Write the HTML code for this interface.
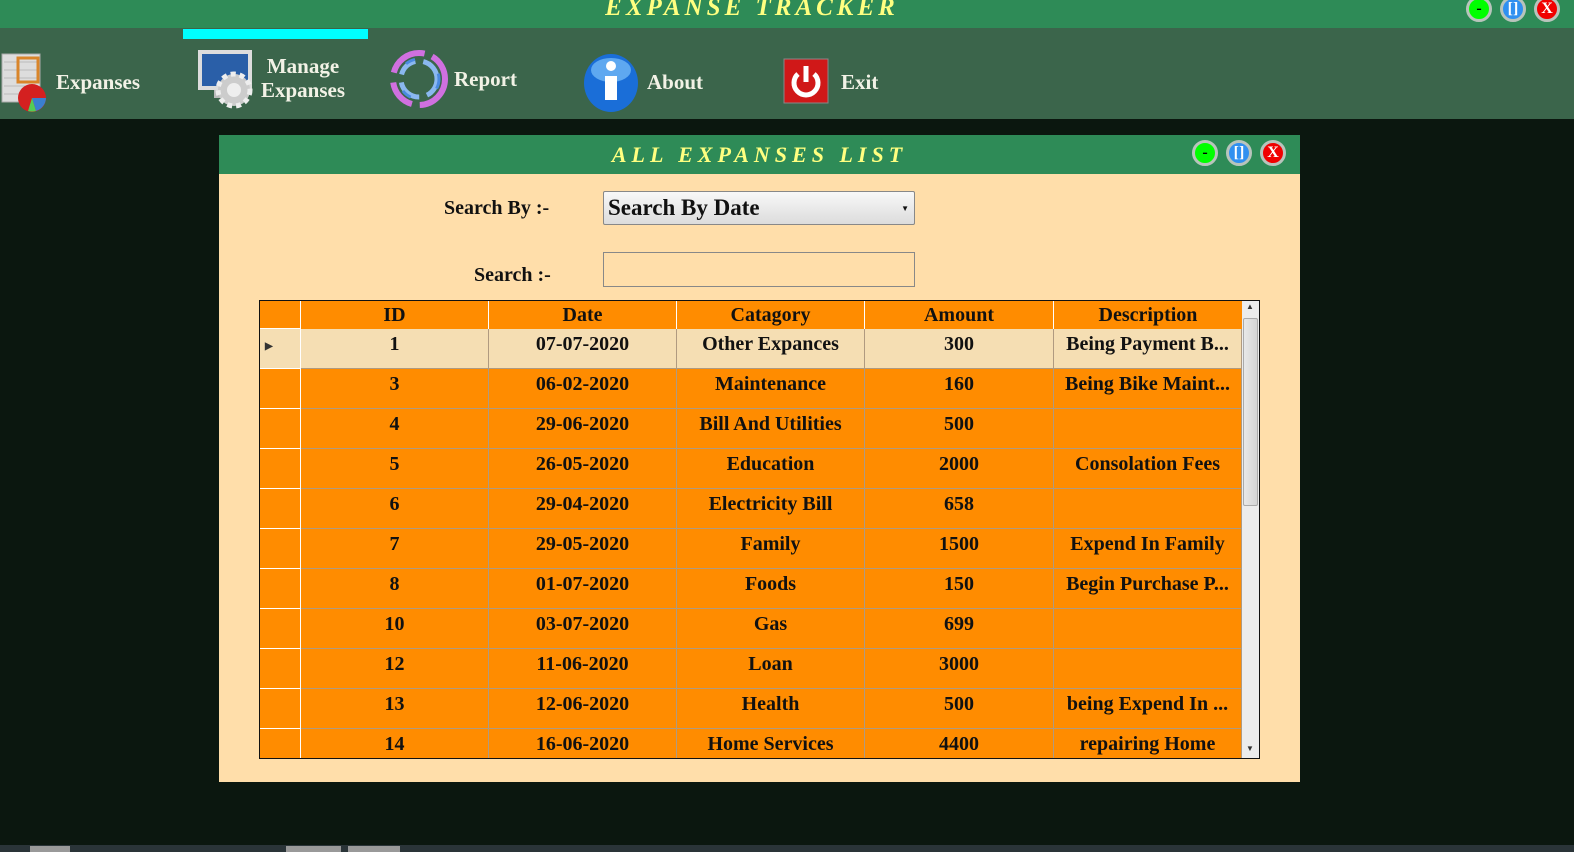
<!DOCTYPE html>
<html><head><meta charset="utf-8"><style>
*{margin:0;padding:0;box-sizing:border-box}
body{width:1574px;height:852px;background:#0b170f;position:relative;overflow:hidden;font-family:"Liberation Serif",serif;font-weight:bold}
.abs{position:absolute}
.top{left:0;top:0;width:1574px;height:28px;background:#2e8b57}
.title{left:0;width:1574px;top:-6px;text-align:center;color:#ffff80;font-style:italic;font-size:25px;letter-spacing:4px;padding-right:70px}
.nav{left:0;top:28px;width:1574px;height:91px;background:#3b654b}
.nt{color:#f2f2e6;font-size:21px;line-height:24px}
.btn{width:26px;height:26px;border-radius:50%;border:3px solid #b8c4bc;text-align:center;font-size:16px;line-height:19px;color:#fff}
.panel{left:219px;top:135px;width:1081px;height:647px;background:#ffdeaa}
.ph{left:219px;top:135px;width:1081px;height:39px;background:#2e8b57}
.lbl{font-size:20px;color:#111}
.cell{position:absolute;text-align:center;font-size:20px;line-height:22px;color:#111;padding-top:4px;border-right:1px solid #b09a80;border-bottom:1px solid #b09a80;overflow:hidden;white-space:nowrap}
</style></head><body>
<div class="abs top"></div>
<div class="abs title">EXPANSE TRACKER</div>
<div class="abs btn" style="left:1466px;top:-4px;background:#00ff00;color:#000">-</div>
<div class="abs btn" style="left:1500px;top:-4px;background:#3090f0">[]</div>
<div class="abs btn" style="left:1534px;top:-4px;background:#f00000">X</div>
<div class="abs nav"></div>
<div class="abs" style="left:183px;top:29px;width:185px;height:10px;background:#00ffff"></div>
<svg class="abs" style="left:0;top:52px" width="52" height="60"><rect x="2" y="2" width="38" height="48" fill="#ddd" stroke="#aaa"/><g stroke="#bbb"><line x1="4" y1="10" x2="38" y2="10"/><line x1="4" y1="18" x2="38" y2="18"/><line x1="4" y1="26" x2="38" y2="26"/><line x1="4" y1="34" x2="38" y2="34"/><line x1="4" y1="42" x2="38" y2="42"/></g><rect x="18" y="6" width="20" height="24" fill="none" stroke="#d9852a" stroke-width="3"/><circle cx="32" cy="46" r="14" fill="#d42020"/><path d="M32 46 L46 46 A14 14 0 0 1 36 59Z" fill="#3a7fd0"/><path d="M32 46 L36 59 A14 14 0 0 1 28 59Z" fill="#5c5"/></svg>
<div class="abs nt" style="left:56px;top:70px">Expanses</div>
<svg class="abs" style="left:196px;top:48px" width="62" height="64"><rect x="2" y="2" width="54" height="40" fill="#ddd"/><rect x="6" y="6" width="46" height="32" fill="#2a5fa8"/><rect x="18" y="42" width="20" height="8" fill="#bbb"/><circle cx="38" cy="42" r="16" fill="#ccc" stroke="#eee" stroke-width="5" stroke-dasharray="5 4"/><circle cx="38" cy="42" r="7" fill="#eee"/></svg>
<div class="abs nt" style="left:261px;top:54px;text-align:center">Manage<br>Expanses</div>
<svg class="abs" style="left:388px;top:48px" width="62" height="62"><circle cx="31" cy="31" r="26" fill="none" stroke="#d070e0" stroke-width="6" stroke-dasharray="40 8 30 10"/><circle cx="31" cy="31" r="18" fill="none" stroke="#8ab8f0" stroke-width="5" stroke-dasharray="20 8 25 8"/><circle cx="31" cy="31" r="20" fill="none" stroke="#4a8ae0" stroke-width="3" stroke-dasharray="10 30"/></svg>
<div class="abs nt" style="left:454px;top:67px">Report</div>
<svg class="abs" style="left:582px;top:52px" width="58" height="62"><ellipse cx="29" cy="31" rx="27" ry="29" fill="#1a6ed8"/><ellipse cx="29" cy="18" rx="20" ry="12" fill="#5ea8f0"/><circle cx="29" cy="14" r="5" fill="#fff"/><rect x="23" y="24" width="12" height="24" fill="#fff"/></svg>
<div class="abs nt" style="left:647px;top:70px">About</div>
<svg class="abs" style="left:783px;top:58px" width="46" height="46"><rect x="1" y="1" width="44" height="44" fill="#d01818" stroke="#888"/><path d="M15 16 A12 12 0 1 0 31 16" fill="none" stroke="#fff" stroke-width="5"/><line x1="23" y1="8" x2="23" y2="24" stroke="#fff" stroke-width="5"/></svg>
<div class="abs nt" style="left:841px;top:70px">Exit</div>

<div class="abs panel"></div>
<div class="abs ph"></div>
<div class="abs" style="left:219px;top:142px;width:1081px;text-align:center;color:#ffff80;font-style:italic;font-size:22px;letter-spacing:5px">ALL EXPANSES LIST</div>
<div class="abs btn" style="left:1192px;top:140px;background:#00ff00;color:#000">-</div>
<div class="abs btn" style="left:1226px;top:140px;background:#3090f0">[]</div>
<div class="abs btn" style="left:1260px;top:140px;background:#f00000">X</div>
<div class="abs lbl" style="left:444px;top:197px">Search By :-</div>
<div class="abs" style="left:603px;top:191px;width:312px;height:34px;border:1px solid #888;border-radius:2px;background:linear-gradient(#f8f8f8,#dcdcdc);font-size:23px;padding:3px 4px;color:#111">Search By Date<span style="position:absolute;right:5px;top:12px;font-size:8px">▼</span></div>
<div class="abs lbl" style="left:474px;top:264px">Search :-</div>
<div class="abs" style="left:603px;top:252px;width:312px;height:35px;border:1px solid #888;background:#ffdeaa"></div>

<div class="abs" style="left:259px;top:300px;width:1001px;height:459px;border:1px solid #111;background:#ff8c00;overflow:hidden"></div>
<div class="abs" style="left:1242px;top:301px;width:17px;height:457px;background:#ececec"></div>
<div class="abs" style="left:1243px;top:318px;width:15px;height:188px;background:linear-gradient(90deg,#e8e8e8,#d4d4d4);border:1px solid #aaa;border-radius:2px"></div>
<div class="abs" style="left:1246px;top:302px;font-size:8px;color:#333">▲</div>
<div class="abs" style="left:1246px;top:744px;font-size:8px;color:#333">▼</div>

<div class="abs" style="left:0;top:845px;width:1574px;height:7px;background:#2a3438"></div>
<div class="abs" style="left:30px;top:846px;width:40px;height:6px;background:#999"></div>
<div class="abs" style="left:286px;top:846px;width:55px;height:6px;background:#999"></div>
<div class="abs" style="left:348px;top:846px;width:52px;height:6px;background:#999"></div>

<div class="abs" style="left:260px;top:301px">
<div class="cell" style="left:0;top:0;width:41px;height:28px;border-color:#fff"></div>
<div class="cell" style="left:41px;top:0;width:188px;height:28px;border-color:#fff;border-bottom:0;padding-top:3px">ID</div>
<div class="cell" style="left:229px;top:0;width:188px;height:28px;border-color:#fff;border-bottom:0;padding-top:3px">Date</div>
<div class="cell" style="left:417px;top:0;width:188px;height:28px;border-color:#fff;border-bottom:0;padding-top:3px">Catagory</div>
<div class="cell" style="left:605px;top:0;width:189px;height:28px;border-color:#fff;border-bottom:0;padding-top:3px">Amount</div>
<div class="cell" style="left:794px;top:0;width:188px;height:28px;border-right:0;border-bottom:0;padding-top:3px">Description</div>
</div>
<div class="abs" style="left:260px;top:329px">
<div style="position:absolute;left:0;top:0;width:982px;height:40px;background:#f5deb3"></div>
<div class="abs" style="left:5px;top:12px;font-size:10px;color:#333">▶</div>
</div>
<div class="abs" style="left:260px;top:329px">
<div class="cell" style="left:0;top:0;width:41px;height:40px;border-color:#fff"></div><div class="cell" style="left:41px;top:0;width:188px;height:40px">1</div><div class="cell" style="left:229px;top:0;width:188px;height:40px">07-07-2020</div><div class="cell" style="left:417px;top:0;width:188px;height:40px">Other Expances</div><div class="cell" style="left:605px;top:0;width:189px;height:40px">300</div><div class="cell" style="left:794px;top:0;width:188px;height:40px">Being Payment B...</div>
<div class="cell" style="left:0;top:40px;width:41px;height:40px;border-color:#fff"></div><div class="cell" style="left:41px;top:40px;width:188px;height:40px">3</div><div class="cell" style="left:229px;top:40px;width:188px;height:40px">06-02-2020</div><div class="cell" style="left:417px;top:40px;width:188px;height:40px">Maintenance</div><div class="cell" style="left:605px;top:40px;width:189px;height:40px">160</div><div class="cell" style="left:794px;top:40px;width:188px;height:40px">Being Bike Maint...</div>
<div class="cell" style="left:0;top:80px;width:41px;height:40px;border-color:#fff"></div><div class="cell" style="left:41px;top:80px;width:188px;height:40px">4</div><div class="cell" style="left:229px;top:80px;width:188px;height:40px">29-06-2020</div><div class="cell" style="left:417px;top:80px;width:188px;height:40px">Bill And Utilities</div><div class="cell" style="left:605px;top:80px;width:189px;height:40px">500</div><div class="cell" style="left:794px;top:80px;width:188px;height:40px"></div>
<div class="cell" style="left:0;top:120px;width:41px;height:40px;border-color:#fff"></div><div class="cell" style="left:41px;top:120px;width:188px;height:40px">5</div><div class="cell" style="left:229px;top:120px;width:188px;height:40px">26-05-2020</div><div class="cell" style="left:417px;top:120px;width:188px;height:40px">Education</div><div class="cell" style="left:605px;top:120px;width:189px;height:40px">2000</div><div class="cell" style="left:794px;top:120px;width:188px;height:40px">Consolation Fees</div>
<div class="cell" style="left:0;top:160px;width:41px;height:40px;border-color:#fff"></div><div class="cell" style="left:41px;top:160px;width:188px;height:40px">6</div><div class="cell" style="left:229px;top:160px;width:188px;height:40px">29-04-2020</div><div class="cell" style="left:417px;top:160px;width:188px;height:40px">Electricity Bill</div><div class="cell" style="left:605px;top:160px;width:189px;height:40px">658</div><div class="cell" style="left:794px;top:160px;width:188px;height:40px"></div>
<div class="cell" style="left:0;top:200px;width:41px;height:40px;border-color:#fff"></div><div class="cell" style="left:41px;top:200px;width:188px;height:40px">7</div><div class="cell" style="left:229px;top:200px;width:188px;height:40px">29-05-2020</div><div class="cell" style="left:417px;top:200px;width:188px;height:40px">Family</div><div class="cell" style="left:605px;top:200px;width:189px;height:40px">1500</div><div class="cell" style="left:794px;top:200px;width:188px;height:40px">Expend In Family</div>
<div class="cell" style="left:0;top:240px;width:41px;height:40px;border-color:#fff"></div><div class="cell" style="left:41px;top:240px;width:188px;height:40px">8</div><div class="cell" style="left:229px;top:240px;width:188px;height:40px">01-07-2020</div><div class="cell" style="left:417px;top:240px;width:188px;height:40px">Foods</div><div class="cell" style="left:605px;top:240px;width:189px;height:40px">150</div><div class="cell" style="left:794px;top:240px;width:188px;height:40px">Begin Purchase P...</div>
<div class="cell" style="left:0;top:280px;width:41px;height:40px;border-color:#fff"></div><div class="cell" style="left:41px;top:280px;width:188px;height:40px">10</div><div class="cell" style="left:229px;top:280px;width:188px;height:40px">03-07-2020</div><div class="cell" style="left:417px;top:280px;width:188px;height:40px">Gas</div><div class="cell" style="left:605px;top:280px;width:189px;height:40px">699</div><div class="cell" style="left:794px;top:280px;width:188px;height:40px"></div>
<div class="cell" style="left:0;top:320px;width:41px;height:40px;border-color:#fff"></div><div class="cell" style="left:41px;top:320px;width:188px;height:40px">12</div><div class="cell" style="left:229px;top:320px;width:188px;height:40px">11-06-2020</div><div class="cell" style="left:417px;top:320px;width:188px;height:40px">Loan</div><div class="cell" style="left:605px;top:320px;width:189px;height:40px">3000</div><div class="cell" style="left:794px;top:320px;width:188px;height:40px"></div>
<div class="cell" style="left:0;top:360px;width:41px;height:40px;border-color:#fff"></div><div class="cell" style="left:41px;top:360px;width:188px;height:40px">13</div><div class="cell" style="left:229px;top:360px;width:188px;height:40px">12-06-2020</div><div class="cell" style="left:417px;top:360px;width:188px;height:40px">Health</div><div class="cell" style="left:605px;top:360px;width:189px;height:40px">500</div><div class="cell" style="left:794px;top:360px;width:188px;height:40px">being Expend In ...</div>
<div class="cell" style="left:0;top:400px;width:41px;height:29px;border-color:#fff;border-bottom:0"></div><div class="cell" style="left:41px;top:400px;width:188px;height:29px;border-bottom:0">14</div><div class="cell" style="left:229px;top:400px;width:188px;height:29px;border-bottom:0">16-06-2020</div><div class="cell" style="left:417px;top:400px;width:188px;height:29px;border-bottom:0">Home Services</div><div class="cell" style="left:605px;top:400px;width:189px;height:29px;border-bottom:0">4400</div><div class="cell" style="left:794px;top:400px;width:188px;height:29px;border-bottom:0">repairing Home</div>
</div>
</body></html>
